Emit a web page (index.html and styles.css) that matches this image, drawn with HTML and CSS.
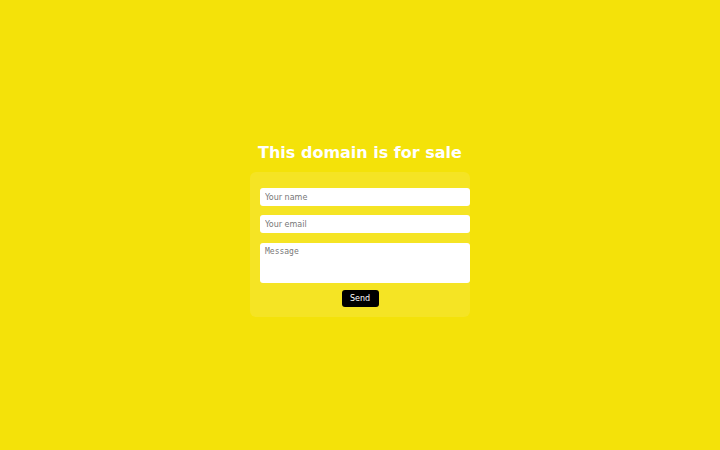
FILE: index.html
```html
<!DOCTYPE html>
<html>
<head>
<meta charset="utf-8">
<link rel="stylesheet" href="styles.css">
</head>
<body>
<main class="page">
  <h1 class="title">This domain is for sale</h1>
  <form class="card">
    <input class="field" type="text" placeholder="Your name">
    <input class="field field-email" type="email" placeholder="Your email">
    <textarea class="field field-msg" placeholder="Message"></textarea>
    <div class="actions"><button class="send" type="button">Send</button></div>
  </form>
</main>
</body>
</html>
```
FILE: styles.css
```css
html, body {
  margin: 0;
  padding: 0;
  background: #f4e209;
  height: 100%;
}
.page {
  padding-top: 142px;
  display: flex;
  flex-direction: column;
  align-items: center;
  font-family: "DejaVu Sans", sans-serif;
}
.title {
  margin: 0 0 8px 0;
  font-size: 16px;
  line-height: 22px;
  font-weight: bold;
  color: #ffffff;
}
.card {
  width: 200px;
  padding: 16px 10px 10px 10px;
  background: #f5e424;
  border-radius: 6px;
  display: flex;
  flex-direction: column;
  margin: 0;
}
.field {
  box-sizing: content-box;
  width: 200px;
  height: 18px;
  padding: 0 5px;
  border: none;
  border-radius: 3px;
  background: #ffffff;
  font-family: "DejaVu Sans", sans-serif;
  font-size: 8px;
  color: #333;
  margin: 0;
  outline: none;
}
.field::placeholder { color: #777; }
.field-email { margin-top: 9px; }
.field-msg {
  margin-top: 10px;
  height: 36px;
  padding: 4px 5px 0 5px;
  font-family: "DejaVu Sans Mono", monospace;
  resize: vertical;
}
.field-msg::-webkit-resizer { background: transparent; }
.actions {
  margin-top: 7px;
  display: flex;
  justify-content: center;
}
.send {
  width: 37px;
  height: 17px;
  padding: 0;
  border: none;
  border-radius: 3px;
  background: #000000;
  color: #ffffff;
  font-family: "DejaVu Sans", sans-serif;
  font-size: 8px;
}
```
